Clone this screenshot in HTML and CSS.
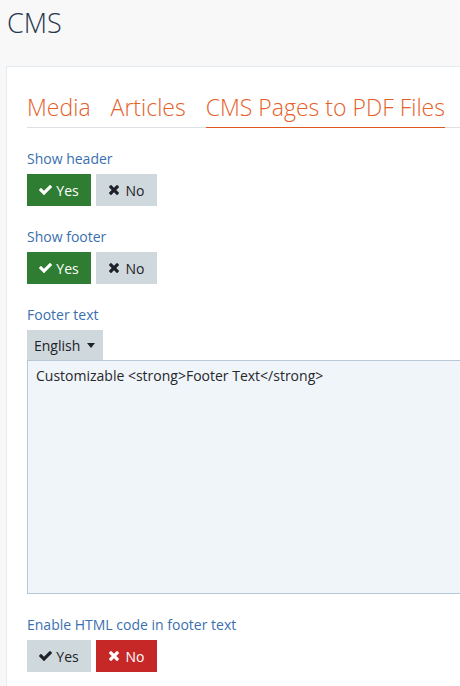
FILE: index.html
```html
<!DOCTYPE html>
<html>
<head>
<meta charset="utf-8">
<link rel="stylesheet" href="styles.css">
</head>
<body>
<h1 class="title">CMS</h1>
<div class="card">
  <div class="tabs">
    <span class="tab">Media</span>
    <span class="tab">Articles</span>
    <span class="tab active">CMS Pages to PDF Files</span>
  </div>

  <div class="field">
    <div class="label">Show header</div>
    <div class="toggle">
      <span class="btn yes on"><svg class="ic" viewBox="121 334 1550 1188"><path d="M1671 566q0 40-28 68l-724 724-136 136q-28 28-68 28t-68-28l-136-136-362-362q-28-28-28-68t28-68l136-136q28-28 68-28t68 28l294 295 656-657q28-28 68-28t68 28l136 136q28 28 28 68z"/></svg>Yes</span>
      <span class="btn no"><svg class="ic x" viewBox="302 366 1188 1188"><path d="M1490 1322q0 40-28 68l-136 136q-28 28-68 28t-68-28l-294-294-294 294q-28 28-68 28t-68-28l-136-136q-28-28-28-68t28-68l294-294-294-294q-28-28-28-68t28-68l136-136q28-28 68-28t68 28l294 294 294-294q28-28 68-28t68 28l136 136q28 28 28 68t-28 68l-294 294 294 294q28 28 28 68z"/></svg>No</span>
    </div>
  </div>

  <div class="field">
    <div class="label">Show footer</div>
    <div class="toggle">
      <span class="btn yes on"><svg class="ic" viewBox="121 334 1550 1188"><path d="M1671 566q0 40-28 68l-724 724-136 136q-28 28-68 28t-68-28l-136-136-362-362q-28-28-28-68t28-68l136-136q28-28 68-28t68 28l294 295 656-657q28-28 68-28t68 28l136 136q28 28 28 68z"/></svg>Yes</span>
      <span class="btn no"><svg class="ic x" viewBox="302 366 1188 1188"><path d="M1490 1322q0 40-28 68l-136 136q-28 28-68 28t-68-28l-294-294-294 294q-28 28-68 28t-68-28l-136-136q-28-28-28-68t28-68l294-294-294-294q-28-28-28-68t28-68l136-136q28-28 68-28t68 28l294 294 294-294q28-28 68-28t68 28l136 136q28 28 28 68t-28 68l-294 294 294 294q28 28 28 68z"/></svg>No</span>
    </div>
  </div>

  <div class="field">
    <div class="label">Footer text</div>
    <div class="lang">English <span class="caret"></span></div>
    <div class="textarea">Customizable &lt;strong&gt;Footer Text&lt;/strong&gt;</div>
  </div>

  <div class="field">
    <div class="label">Enable HTML code in footer text</div>
    <div class="toggle">
      <span class="btn yes"><svg class="ic" viewBox="121 334 1550 1188"><path d="M1671 566q0 40-28 68l-724 724-136 136q-28 28-68 28t-68-28l-136-136-362-362q-28-28-28-68t28-68l136-136q28-28 68-28t68 28l294 295 656-657q28-28 68-28t68 28l136 136q28 28 28 68z"/></svg>Yes</span>
      <span class="btn no off"><svg class="ic x" viewBox="302 366 1188 1188"><path d="M1490 1322q0 40-28 68l-136 136q-28 28-68 28t-68-28l-294-294-294 294q-28 28-68 28t-68-28l-136-136q-28-28-28-68t28-68l294-294-294-294q-28-28-28-68t28-68l136-136q28-28 68-28t68 28l294 294 294-294q28-28 68-28t68 28l136 136q28 28 28 68t-28 68l-294 294 294 294q28 28 28 68z"/></svg>No</span>
    </div>
  </div>
</div>
</body>
</html>
```
FILE: styles.css
```css
html, body {
  margin: 0;
  padding: 0;
}
body {
  background: #f8f8f8;
  font-family: "Open Sans", "Noto Sans", sans-serif;
  color: #25272a;
  width: 470px;
  height: 686px;
  overflow: hidden;
}
.title {
  margin: 0;
  padding: 5px 0 0 7px;
  height: 66px;
  box-sizing: border-box;
  font-size: 27px;
  font-weight: 300;
  color: #25374f;
  line-height: 36px;
}
.card {
  margin-left: 6px;
  background: #fff;
  border: 1px solid #e5ebf3;
  border-right: none;
  padding: 22px 0 20px 20px;
  min-height: 640px;
}
.tabs {
  display: flex;
  gap: 20px;
  border-bottom: 1px solid #dcdfe3;
  height: 39px;
  box-sizing: border-box;
}
.tab {
  font-size: 23px;
  font-weight: 300;
  line-height: 36px;
  height: 39px;
  box-sizing: border-box;
  color: #e5602a;
  white-space: nowrap;
}
.tab.active {
  border-bottom: 1px solid #e0571c;
}
.field {
  margin-top: 21px;
}
.label {
  font-size: 14px;
  line-height: 20px;
  color: #3a6fb0;
  margin-bottom: 5px;
}
.toggle {
  display: flex;
  gap: 5px;
}
.btn {
  display: flex;
  align-items: center;
  justify-content: center;
  height: 32px;
  font-size: 14px;
  color: #1e2228;
  background: #cfd8dc;
}
.btn.yes { width: 64px; }
.btn.no { width: 61px; }
.btn.on { background: #2e7d32; color: #fff; }
.btn.off { background: #c62828; color: #fff; }
.ic {
  width: 13px;
  height: 10px;
  margin-right: 4px;
  fill: currentColor;
}
.ic.x {
  width: 10px;
  height: 10px;
  margin-right: 7px;
}
.lang {
  display: inline-flex;
  align-items: center;
  height: 30px;
  padding: 0 8px 0 7px;
  background: #cfd8dc;
  font-size: 14px;
  color: #1e2228;
}
.caret {
  display: inline-block;
  margin-left: 7px;
  width: 0;
  height: 0;
  border-left: 4.5px solid transparent;
  border-right: 4.5px solid transparent;
  border-top: 5px solid #1e2228;
}
.textarea {
  height: 234px;
  box-sizing: border-box;
  background: #f0f5fa;
  border: 1px solid #b6c8d8;
  border-right: none;
  padding: 5px 8px;
  font-size: 14px;
  line-height: 20px;
  color: #25272a;
}
```
